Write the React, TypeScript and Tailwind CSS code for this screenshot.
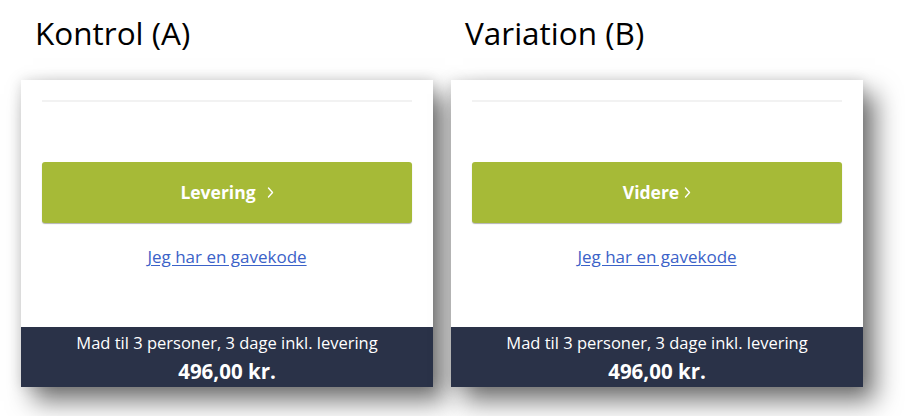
import React from "react";

function Chevron() {
  return (
    <svg width="7" height="11" viewBox="0 0 7 11" className="inline-block">
      <polyline points="1.5,1 5.5,5.5 1.5,10" fill="none" stroke="white" strokeWidth="1.4" strokeLinecap="round" strokeLinejoin="round" />
    </svg>
  );
}

function Variant({ title, label, wide }: { title: string; label: string; wide?: boolean }) {
  return (
    <div className="flex flex-col w-[412px]">
      <h2 className="h-[80px] pl-[14px] pt-[13px] text-[31.5px] leading-[40px] text-black font-['Open_Sans',sans-serif]">
        {title}
      </h2>
      <div className="bg-white h-[307px] flex flex-col shadow-[12px_14px_24px_rgba(0,0,0,0.55),0_0_12px_rgba(0,0,0,0.12)] relative z-0">
        <div className="mx-[21px] mt-[20px] border-t-2 border-[#f2f2f2]" />
        <button className="mx-[21px] mt-[60px] h-[61px] rounded-[3px] bg-[#a6ba37] shadow-[0_1px_1px_rgba(0,0,0,0.3)] text-white font-bold text-[17.5px] font-['Open_Sans',sans-serif] flex items-center justify-center">
          <span>{label}</span>
          <span className={wide ? "ml-[11px] flex" : "ml-[5px] flex"}>
            <Chevron />
          </span>
        </button>
        <a
          href="#"
          className="mt-[21px] text-center text-[17px] text-[#3b62c8] underline underline-offset-2 font-['Open_Sans',sans-serif]"
        >
          Jeg har en gavekode
        </a>
        <div className="mt-auto h-[60px] bg-[#2a3248] text-white flex flex-col items-center justify-center font-['Open_Sans',sans-serif]">
          <p className="text-[16.5px] leading-[26px] mt-[1px]">Mad til 3 personer, 3 dage inkl. levering</p>
          <p className="text-[20.5px] leading-[30px] font-bold">496,00 kr.</p>
        </div>
      </div>
    </div>
  );
}

export default function App() {
  return (
    <div className="w-[905px] h-[416px] bg-white flex gap-[18px] pl-[21px] overflow-hidden">
      <Variant title="Kontrol (A)" label="Levering" wide />
      <Variant title="Variation (B)" label="Videre" />
    </div>
  );
}
